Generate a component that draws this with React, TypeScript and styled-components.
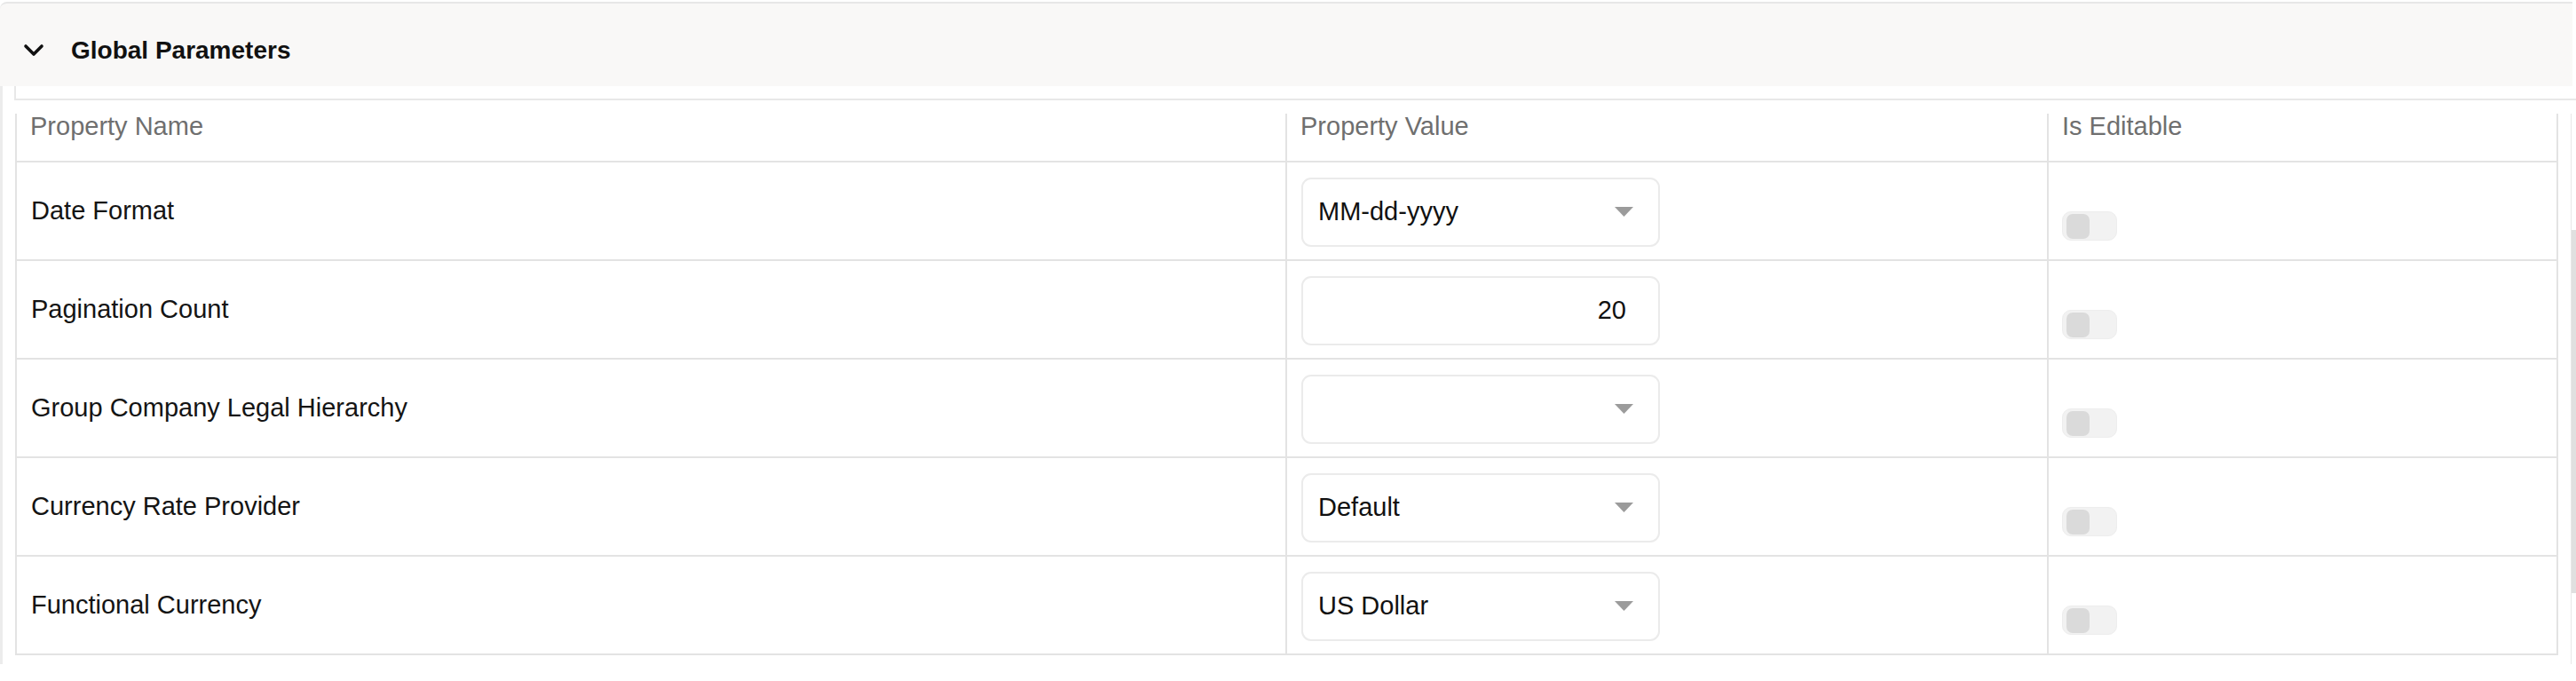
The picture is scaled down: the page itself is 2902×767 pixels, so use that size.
import React from "react";
import styled, { createGlobalStyle } from "styled-components";

const GlobalStyle = createGlobalStyle`
  html, body { margin: 0; padding: 0; background: #ffffff; }
  body { font-family: "Liberation Sans", Arial, sans-serif; }
  * { box-sizing: border-box; }
`;

const Page = styled.div`
  width: 2902px;
  padding-top: 2px;
`;

const AccordionHeader = styled.div`
  display: flex;
  align-items: center;
  gap: 30px;
  width: 2898px;
  height: 95px;
  padding: 12px 0 0 26px;
  border-top: 2px solid #e7e7e7;
  border-top-left-radius: 8px;
  background: #f9f8f7;
`;

const Title = styled.span`
  font-size: 28px;
  font-weight: 700;
  color: #111111;
`;

const Body = styled.div`
  height: 651px;
  padding-left: 14px;
  border-left: 3px solid #ececec;
`;

const Strip = styled.div`
  height: 16px;
  margin-left: -1px;
  border-left: 2px solid #e8e8e8;
  border-bottom: 2px solid #e8e8e8;
`;

const GridArea = styled.div`
  display: flex;
  gap: 14px;
  margin-top: 15px;
  height: 620px;
`;

const Table = styled.div`
  width: 2865px;
  align-self: flex-start;
  border-left: 2px solid #e3e3e3;
  border-right: 2px solid #e3e3e3;
`;

const Row = styled.div<{ $head?: boolean }>`
  display: grid;
  grid-template-columns: 1431px 858px 1fr;
  height: ${(p) => (p.$head ? "55px" : "111px")};
  border-bottom: 2px solid #e3e3e3;
`;

const HeadCell = styled.div<{ $last?: boolean }>`
  padding: 0 15px;
  font-size: 29px;
  line-height: 28px;
  color: #6f6f6f;
  border-right: ${(p) => (p.$last ? "none" : "2px solid #e3e3e3")};
`;

const Cell = styled.div<{ $last?: boolean; $pad?: number }>`
  display: flex;
  align-items: center;
  padding-left: ${(p) => p.$pad ?? 16}px;
  font-size: 29px;
  color: #141414;
  border-right: ${(p) => (p.$last ? "none" : "2px solid #e3e3e3")};
`;

const Field = styled.div<{ $right?: boolean }>`
  display: flex;
  align-items: center;
  justify-content: ${(p) => (p.$right ? "flex-end" : "space-between")};
  width: 404px;
  height: 78px;
  margin-top: 2px;
  padding: ${(p) => (p.$right ? "0 36px 0 17px" : "0 28px 0 17px")};
  border: 2px solid #ebebeb;
  border-radius: 11px;
  font-size: 29px;
  color: #111111;
  background: #ffffff;
`;

const Toggle = styled.div`
  display: flex;
  align-items: center;
  width: 62px;
  height: 33px;
  margin-top: 34px;
  padding-left: 4px;
  border: 1px solid #ededed;
  border-radius: 10px;
  background: #f2f2f2;
`;

const Knob = styled.div`
  width: 26px;
  height: 28px;
  border-radius: 7px;
  background: #dadada;
`;

const Scrollbar = styled.div`
  display: flex;
  flex-direction: column;
  width: 6px;
  padding-top: 131px;
  border-left: 1px solid #e8e8e8;
`;

const Thumb = styled.div`
  height: 409px;
  background: #e0e0e0;
`;

const Chevron = () => (
  <svg width="24" height="16" viewBox="0 0 24 16">
    <polyline
      points="3,3 12,12 21,3"
      fill="none"
      stroke="#111"
      strokeWidth="3.6"
      strokeLinecap="round"
      strokeLinejoin="round"
    />
  </svg>
);

const Caret = () => (
  <svg width="21" height="11" viewBox="0 0 21 11">
    <polygon points="0,0 21,0 10.5,11" fill="#9b9b9b" />
  </svg>
);

type RowData = { name: string; kind: "select" | "number"; value: string };

const rows: RowData[] = [
  { name: "Date Format", kind: "select", value: "MM-dd-yyyy" },
  { name: "Pagination Count", kind: "number", value: "20" },
  { name: "Group Company Legal Hierarchy", kind: "select", value: "" },
  { name: "Currency Rate Provider", kind: "select", value: "Default" },
  { name: "Functional Currency", kind: "select", value: "US Dollar" },
];

export default function App() {
  return (
    <Page>
      <GlobalStyle />
      <AccordionHeader>
        <Chevron />
        <Title>Global Parameters</Title>
      </AccordionHeader>
      <Body>
        <Strip />
        <GridArea>
          <Table>
            <Row $head>
              <HeadCell>Property Name</HeadCell>
              <HeadCell>Property Value</HeadCell>
              <HeadCell $last>Is Editable</HeadCell>
            </Row>
            {rows.map((r) => (
              <Row key={r.name}>
                <Cell>{r.name}</Cell>
                <Cell>
                  {r.kind === "number" ? (
                    <Field $right>{r.value}</Field>
                  ) : (
                    <Field>
                      <span>{r.value}</span>
                      <Caret />
                    </Field>
                  )}
                </Cell>
                <Cell $last $pad={15}>
                  <Toggle>
                    <Knob />
                  </Toggle>
                </Cell>
              </Row>
            ))}
          </Table>
          <Scrollbar>
            <Thumb />
          </Scrollbar>
        </GridArea>
      </Body>
    </Page>
  );
}
